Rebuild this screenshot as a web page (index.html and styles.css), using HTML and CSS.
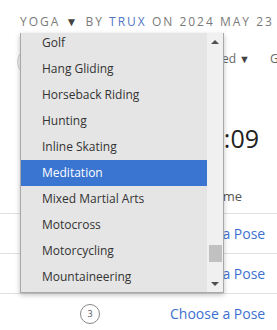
FILE: index.html
```html
<!DOCTYPE html>
<html lang="en">
<head>
    <meta charset="UTF-8">
    <meta name="viewport" content="width=device-width, initial-scale=1.0">
    <title>Yoga Session</title>
    <link rel="stylesheet" href="styles.css">
</head>
<body>
<div class="page">
    <div class="byline">
        <span class="cat">Yoga</span> <span class="caret">&#9660;</span>
        by <span class="author">Trux</span> on 2024 May 23 <span class="dot"></span>
    </div>

    <div class="sort-row">
        <div class="avatar"></div>
        <div class="sort-label">Sort: Recently Added <span class="caret-sm">&#9660;</span></div>
        <div class="go">Go</div>
    </div>

    <div class="timer">0:00:09</div>

    <div class="poses">
        <div class="pose-head">
            <span></span>
            <span class="head-name">Pose Name</span>
        </div>
        <div class="pose-row">
            <span class="step">1</span>
            <a href="#" class="pose-link">Choose a Pose</a>
        </div>
        <div class="pose-row">
            <span class="step">2</span>
            <a href="#" class="pose-link">Choose a Pose</a>
        </div>
        <div class="pose-row">
            <span class="step">3</span>
            <a href="#" class="pose-link">Choose a Pose</a>
        </div>
    </div>

    <!-- open category dropdown -->
    <div class="dropdown">
        <ul class="options">
            <li>Golf</li>
            <li>Hang Gliding</li>
            <li>Horseback Riding</li>
            <li>Hunting</li>
            <li>Inline Skating</li>
            <li class="selected">Meditation</li>
            <li>Mixed Martial Arts</li>
            <li>Motocross</li>
            <li>Motorcycling</li>
            <li>Mountaineering</li>
        </ul>
        <div class="scrollbar">
            <div class="arrow"><span class="tri-up"></span></div>
            <div class="track"><div class="thumb"></div></div>
            <div class="arrow"><span class="tri-down"></span></div>
        </div>
    </div>
</div>
</body>
</html>
```

FILE: styles.css
```css
/* Global Styles */
body {
    margin: 0;
    padding: 0;
    background-color: #fff;
    font-family: 'Open Sans', sans-serif;
    color: #333;
}

.page {
    position: relative;
    width: 277px;
    height: 330px;
    overflow: hidden;
}

/* Byline */
.byline {
    padding: 13px 0 0 20px;
    height: 20px;
    font-size: 12px;
    letter-spacing: 2px;
    text-transform: uppercase;
    color: #7a7a7a;
    white-space: nowrap;
}

.caret {
    color: #444;
    font-size: 12px;
    letter-spacing: 3px;
}

.author {
    color: #5176c4;
}

.dot {
    display: inline-block;
    width: 4px;
    height: 4px;
    border-radius: 50%;
    background-color: #f0a040;
    vertical-align: middle;
}

/* Sort row */
.sort-row {
    display: grid;
    grid-template-columns: 17px 233px auto;
    align-items: center;
    height: 50px;
    font-size: 12px;
    color: #666;
    white-space: nowrap;
}

.avatar {
    width: 30px;
    height: 30px;
    margin-top: 8px;
    border-radius: 50%;
    border: 1px solid #d0d0d0;
    background-color: #f3f3f3;
    box-sizing: border-box;
    transform: translateX(17px);
}

.sort-label {
    text-align: right;
}

.caret-sm {
    color: #444;
    font-size: 11px;
}

.go {
    padding-left: 20px;
}

/* Timer */
.timer {
    width: 259px;
    margin-top: 40px;
    text-align: right;
    font-size: 25px;
    line-height: 30px;
    color: #222;
}

/* Poses table */
.poses {
    margin-top: 26px;
}

.pose-head,
.pose-row {
    display: grid;
    grid-template-columns: 160px 1fr;
    align-items: center;
    padding-left: 10px;
}

.pose-head {
    height: 34px;
    font-size: 13px;
    color: #555;
}

.head-name {
    text-align: right;
    padding-right: 35px;
    white-space: nowrap;
}

.pose-row {
    height: 39px;
    border-top: 1px solid #e0e0e0;
}

.step {
    justify-self: center;
    width: 18px;
    height: 18px;
    border: 1px solid #888;
    border-radius: 50%;
    font-size: 9px;
    line-height: 18px;
    text-align: center;
    color: #555;
}

.pose-link {
    text-align: right;
    padding-right: 12px;
    font-size: 14px;
    color: #3d6fd0;
    text-decoration: none;
    white-space: nowrap;
}

/* Dropdown */
.dropdown {
    position: absolute;
    left: 20px;
    top: 33px;
    width: 204px;
    height: 260px;
    box-sizing: border-box;
    border: 1px solid #a8a8a8;
    border-top: none;
    display: flex;
    background-color: #e5e5e5;
    box-shadow: 0 2px 5px rgba(0, 0, 0, 0.25);
    overflow: hidden;
}

.options {
    flex: 1;
    list-style: none;
    margin: -3px 0 0 0;
    padding: 0;
}

.options li {
    height: 26px;
    line-height: 26px;
    padding-left: 21px;
    font-size: 12px;
    color: #333;
    white-space: nowrap;
}

.options li.selected {
    background-color: #3a75d2;
    color: #fff;
}

.scrollbar {
    width: 16px;
    display: flex;
    flex-direction: column;
    background-color: #f0f0f0;
}

.arrow {
    height: 17px;
    display: flex;
    align-items: center;
    justify-content: center;
}

.tri-up,
.tri-down {
    width: 0;
    height: 0;
    border-left: 4px solid transparent;
    border-right: 4px solid transparent;
}

.tri-up {
    border-bottom: 4px solid #505050;
}

.tri-down {
    border-top: 4px solid #505050;
}

.track {
    flex: 1;
}

.thumb {
    margin: 195px 1px 0 2px;
    height: 17px;
    background-color: #c1c1c1;
}
```
